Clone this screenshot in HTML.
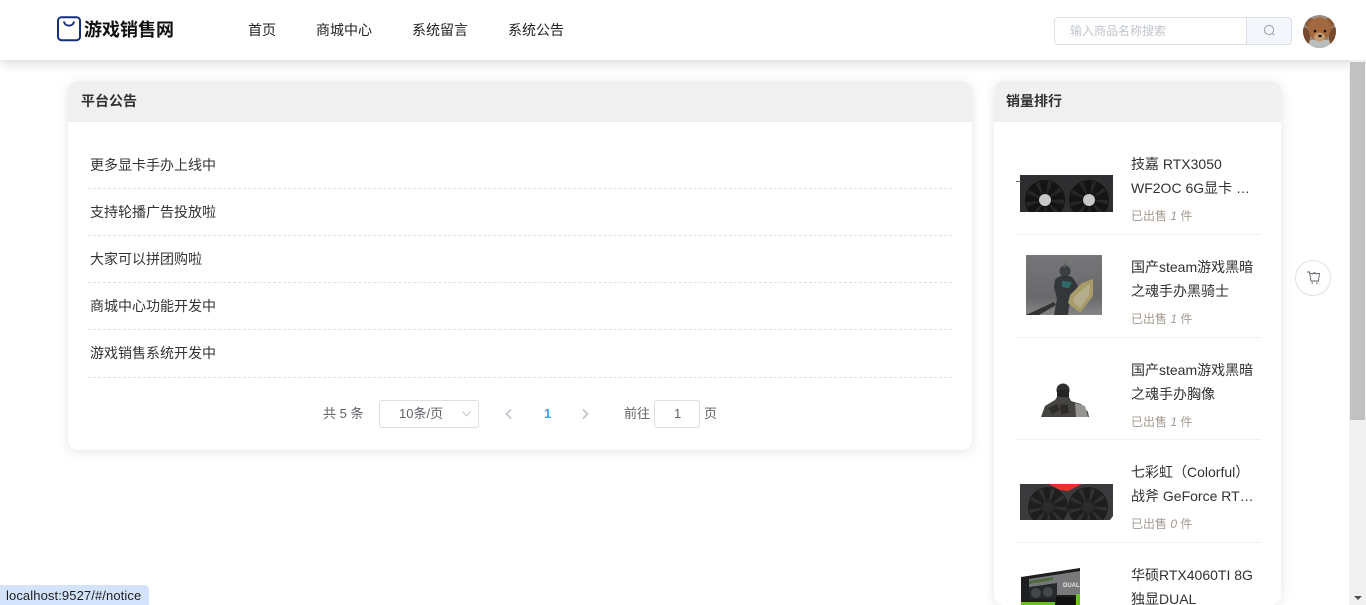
<!DOCTYPE html>
<html lang="zh"><head><meta charset="utf-8"><title>游戏销售网</title>
<style>
*{box-sizing:border-box}
html,body{margin:0;padding:0;width:1366px;height:605px;overflow:hidden;background:#fff;font-family:"Liberation Sans","Noto Sans CJK SC",sans-serif;color:#303133}
#wrap{position:absolute;left:0;top:0;width:1366px;height:605px;overflow:hidden}
.a{position:absolute;white-space:nowrap}
#hd{position:absolute;left:0;top:0;width:1366px;height:60px;background:#fff;box-shadow:0 2px 12px rgba(0,0,0,.18);z-index:3}
.nav{font-size:14px;line-height:20px;top:20px;color:#222}
.card{position:absolute;top:81px;background:#fff;border-radius:10px;box-shadow:0 2px 12px rgba(0,0,0,.1);overflow:hidden}
.ch{height:41px;background:#f0f0f0;border-bottom:1px solid #ebeef5;font-size:14px;font-weight:bold;line-height:41px;padding-left:13px;color:#303133}
.row{left:88px;width:864px;height:1px;border-top:1px dashed #e0e0e0}
.nt{left:90px;font-size:14px;line-height:20px;color:#333}
.pg{font-size:13px;line-height:18px;color:#606266}
.t{left:1131px;font-size:14px;line-height:24px;color:#303133}
.s{left:1131px;font-size:12px;line-height:16px;color:#a39a8f}
.s i{font-style:italic}
.sep{left:1016px;width:245px;height:1px;border-top:1px dotted #e6e6e6}
.im{filter:blur(.35px)}
</style></head><body><div id="wrap">

<div id="hd">
<svg class="a" style="left:57px;top:16px" width="24" height="26" viewBox="0 0 24 26"><rect x="1" y="1.200" width="22" height="23" rx="3.500" fill="none" stroke="#142f7c" stroke-width="2"/><path d="M7 5.500c.8 5.500 9.200 5.500 10 0" fill="none" stroke="#142f7c" stroke-width="2"/></svg>
<div class="a" style="left:84px;top:18px;font-size:18px;line-height:24px;font-weight:bold;color:#111">游戏销售网</div>
<div class="a nav" style="left:248px">首页</div>
<div class="a nav" style="left:316px">商城中心</div>
<div class="a nav" style="left:412px">系统留言</div>
<div class="a nav" style="left:508px">系统公告</div>
<div class="a" style="left:1054px;top:17px;width:238px;height:28px;border:1px solid #dcdfe6;border-radius:4px;background:#fff"></div>
<div class="a" style="left:1246px;top:17px;width:46px;height:28px;border:1px solid #dcdfe6;border-radius:0 4px 4px 0;background:#f3f6fa"></div>
<div class="a" style="left:1070px;top:22px;font-size:12px;line-height:18px;color:#c0c4cc">输入商品名称搜索</div>
<svg class="a" style="left:1263px;top:24px" width="13" height="13" viewBox="0 0 13 13"><circle cx="6" cy="6" r="4.600" fill="none" stroke="#98a2ad" stroke-width="1"/><path d="M9.500 9.500l1.800 1.800" stroke="#98a2ad" fill="none"/></svg>
<svg class="a im" style="left:1303px;top:15px" width="33" height="33" viewBox="0 0 33 33"><defs><clipPath id="av"><circle cx="16.500" cy="16.500" r="16.500"/></clipPath></defs><g clip-path="url(#av)"><rect width="33" height="33" fill="#9a8d82"/><rect x="6" y="25" width="21" height="8" fill="#b9bebd"/><circle cx="7" cy="8" r="5" fill="#8a5a38"/><circle cx="26" cy="8" r="5" fill="#8a5a38"/><ellipse cx="16.500" cy="14" rx="12" ry="11.500" fill="#a2683f"/><path d="M0 13c3-3 7 3 7 10s-4 7-7 6zM33 13c-3-3-7 3-7 10s4 7 7 6z" fill="#754a2e"/><ellipse cx="16.500" cy="22" rx="5.500" ry="4.500" fill="#c69a70"/><circle cx="12" cy="16" r="1.300" fill="#111"/><circle cx="22" cy="16" r="1.300" fill="#111"/><ellipse cx="17" cy="21" rx="1.700" ry="1.200" fill="#111"/></g></svg>
</div>

<div class="card" style="left:68px;width:904px;height:369px"><div class="ch">平台公告</div></div>
<div class="a nt" style="top:155px">更多显卡手办上线中</div><div class="a row" style="top:188px"></div>
<div class="a nt" style="top:202px">支持轮播广告投放啦</div><div class="a row" style="top:235px"></div>
<div class="a nt" style="top:249px">大家可以拼团购啦</div><div class="a row" style="top:282px"></div>
<div class="a nt" style="top:296px">商城中心功能开发中</div><div class="a row" style="top:329px"></div>
<div class="a nt" style="top:343px">游戏销售系统开发中</div><div class="a row" style="top:377px"></div>

<div class="a pg" style="left:323px;top:405px">共 5 条</div>
<div class="a" style="left:379px;top:400px;width:100px;height:28px;border:1px solid #dcdfe6;border-radius:3px"></div>
<div class="a pg" style="left:399px;top:405px">10条/页</div>
<svg class="a" style="left:461px;top:410px" width="11" height="8" viewBox="0 0 11 8"><path d="M1.500 1.500l4 4.500 4-4.500" fill="none" stroke="#c0c4cc"/></svg>
<svg class="a" style="left:503px;top:408px" width="10" height="12" viewBox="0 0 10 12"><path d="M8 1.500L3.500 6 8 10.500" fill="none" stroke="#c0c4cc" stroke-width="1.800"/></svg>
<div class="a pg" style="left:544px;top:405px;font-weight:bold;color:#409eff">1</div>
<svg class="a" style="left:581px;top:408px" width="10" height="12" viewBox="0 0 10 12"><path d="M2 1.500L6.500 6 2 10.500" fill="none" stroke="#c0c4cc" stroke-width="1.800"/></svg>
<div class="a pg" style="left:624px;top:405px">前往</div>
<div class="a" style="left:654px;top:400px;width:46px;height:28px;border:1px solid #dcdfe6;border-radius:3px"></div>
<div class="a pg" style="left:674px;top:405px">1</div>
<div class="a pg" style="left:704px;top:405px">页</div>

<div class="card" style="left:994px;width:287px;height:524px"><div class="ch" style="padding-left:12px">销量排行</div></div>

<!-- product 1 -->
<svg class="a im" style="left:1016px;top:172px" width="98" height="42" viewBox="0 0 98 42"><defs><clipPath id="g1"><rect x="4" y="3" width="93" height="37"/></clipPath></defs><rect x="4" y="3" width="93" height="37" fill="#2e2e31"/><rect x="0" y="9" width="5" height="1" fill="#666"/><g clip-path="url(#g1)"><circle cx="29" cy="28" r="20" fill="#141414"/><circle cx="73" cy="28" r="20" fill="#141414"/><circle cx="29" cy="28" r="13" fill="none" stroke="#262626" stroke-width="12" stroke-dasharray="3 6"/><circle cx="73" cy="28" r="13" fill="none" stroke="#262626" stroke-width="12" stroke-dasharray="3 6"/><circle cx="29" cy="28" r="6" fill="#c8c8c8"/><circle cx="73" cy="28" r="6" fill="#c8c8c8"/></g></svg>
<div class="a t" style="top:152px">技嘉 RTX3050</div>
<div class="a t" style="top:176px">WF2OC 6G显卡 …</div>
<div class="a s" style="top:208px">已出售 <i>1</i> 件</div>
<div class="a sep" style="top:234px"></div>

<!-- product 2 -->
<svg class="a im" style="left:1026px;top:255px" width="76" height="60" viewBox="0 0 76 60"><defs><linearGradient id="kb" x1="0" y1="0" x2="0" y2="1"><stop offset="0" stop-color="#767678"/><stop offset=".7" stop-color="#69696c"/><stop offset="1" stop-color="#858587"/></linearGradient></defs><rect width="76" height="60" fill="url(#kb)"/><path d="M0 60l28-13 2 3-17 10z" fill="#333"/><circle cx="39" cy="16" r="5.500" fill="#3c3f41"/><path d="M39 7l1 6-3 0z" fill="#555"/><path d="M29 25c3-5 14-6 18-2l5 8-8 13-2 16H28l3-16-3-12z" fill="#33373a"/><path d="M36 26l10 1-3 6-7-1z" fill="#2f6a68"/><path d="M67 24l0 17-13 17-12-10 2-8 12-12z" fill="#a89b6a"/><path d="M64 29l-1 11-9 13-7-6 2-6 9-8z" fill="#b5ae8c"/></svg>
<div class="a t" style="top:255px">国产steam游戏黑暗</div>
<div class="a t" style="top:279px">之魂手办黑骑士</div>
<div class="a s" style="top:311px">已出售 <i>1</i> 件</div>
<div class="a sep" style="top:337px"></div>

<!-- product 3 -->
<svg class="a im" style="left:1040px;top:380px" width="50" height="38" viewBox="0 0 50 38"><circle cx="23" cy="10" r="6.500" fill="#2f2e2d"/><path d="M17 10h12v7H17z" fill="#232323"/><path d="M1 37l4-11 10-6 2-3h12l2 4 10 3 7 8 1 5z" fill="#454441"/><path d="M8 28l9-4 3 6-8 4zM20 24l8 1 1 8-8 1z" fill="#2d2c2a"/><path d="M35 23l10 3 3 11H36z" fill="#96948e"/></svg>
<div class="a t" style="top:358px">国产steam游戏黑暗</div>
<div class="a t" style="top:382px">之魂手办胸像</div>
<div class="a s" style="top:414px">已出售 <i>1</i> 件</div>
<div class="a sep" style="top:439px"></div>

<!-- product 4 -->
<svg class="a im" style="left:1016px;top:484px" width="98" height="36" viewBox="0 0 98 36"><defs><clipPath id="g4"><path d="M4 0h93v32l-3 4H4z"/></clipPath></defs><path d="M4 0h93v32l-3 4H4z" fill="#3a3a3d"/><g clip-path="url(#g4)"><circle cx="32" cy="23" r="20" fill="#1e1e1f"/><circle cx="72" cy="23" r="20" fill="#1e1e1f"/><circle cx="32" cy="23" r="13" fill="none" stroke="#303032" stroke-width="12" stroke-dasharray="3 6"/><circle cx="72" cy="23" r="13" fill="none" stroke="#303032" stroke-width="12" stroke-dasharray="3 6"/><circle cx="32" cy="23" r="6" fill="#2b2b2c"/><circle cx="72" cy="23" r="6" fill="#2b2b2c"/></g><path d="M33 0h33l-14 7-8-1z" fill="#e5322d"/></svg>
<div class="a t" style="top:460px">七彩虹（Colorful）</div>
<div class="a t" style="top:484px">战斧 GeForce RT…</div>
<div class="a s" style="top:516px">已出售 <i>0</i> 件</div>
<div class="a sep" style="top:542px"></div>

<!-- product 5 -->
<svg class="a im" style="left:1020px;top:567px" width="62" height="38" viewBox="0 0 62 38"><path d="M1 10L60 1v37H1z" fill="#1c1e20"/><path d="M9 12l51-8v24H9z" fill="#77797b"/><path d="M9 14l24-4 0 3-24 4z" fill="#4d6a3c"/><path d="M9 20l28-4v16H9z" fill="#26282b"/><circle cx="16" cy="26" r="5" fill="#44464a"/><circle cx="28" cy="25" r="5" fill="#44464a"/><text x="43" y="20" font-size="6" font-weight="bold" fill="#e4e4e4" font-family="Liberation Sans,sans-serif">DUAL</text><path d="M1 35h34v3H1z" fill="#6cc024"/><path d="M36 30h19v8H36z" fill="#111"/><path d="M56 27h4v11h-4z" fill="#6cc024"/></svg>
<div class="a t" style="top:563px">华硕RTX4060TI 8G</div>
<div class="a t" style="top:587px">独显DUAL</div>

<!-- cart -->
<div class="a" style="left:1295px;top:260px;width:36px;height:36px;border:1px solid #dfe1ea;border-radius:50%;background:#fff"></div>
<svg class="a" style="left:1306px;top:270px" width="15" height="15" viewBox="0 0 15 15"><path d="M1 2h2.500l1.500 9h7.500l1-7.500H3.800" fill="none" stroke="#606266" stroke-width=".9"/><path d="M6.500 5c0-3.500 4-3.500 4 0" fill="none" stroke="#a0a4b0" stroke-width=".9"/><circle cx="6.200" cy="13" r=".8" fill="#606266"/><circle cx="10.800" cy="13" r=".8" fill="#606266"/></svg>

<!-- scrollbar -->
<div class="a" style="left:1349px;top:60px;width:17px;height:545px;background:#f1f1f1;z-index:4"></div>
<div class="a" style="left:1350px;top:62px;width:15px;height:358px;background:#c1c1c1;z-index:5"></div>
<div class="a" style="left:1354px;top:596px;width:0;height:0;border-left:4px solid transparent;border-right:4px solid transparent;border-top:4px solid #505050;z-index:5"></div>

<!-- status -->
<div class="a" style="left:0;top:585px;width:149px;height:20px;background:#d4e3fc;border-radius:0 5px 0 0;padding-left:6px;font-size:13px;letter-spacing:.1px;line-height:22px;color:#1f1f1f;z-index:6">localhost:9527/#/notice</div>
</div></body></html>
